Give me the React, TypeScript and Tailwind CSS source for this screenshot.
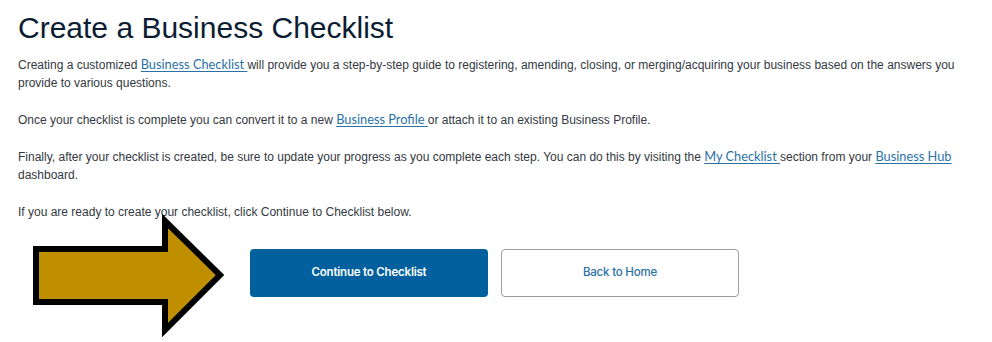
export default function App() {
  const link = 'text-[#2a71a8] underline underline-offset-2 decoration-[#2a71a8] font-["Lato",sans-serif] text-[12.8px] leading-none';

  return (
    <div className="relative w-[992px] h-[342px] bg-white overflow-hidden font-['Liberation_Sans',Arial,sans-serif]">
      <div className="px-[18px] pt-[11px]">
        <h1 className="text-[30px] leading-[34px] text-[#0b1d33]">Create a Business Checklist</h1>
        <div className="mt-[11px] text-[12px] leading-[18px] text-[#333842] space-y-[19px]">
          <p>
            Creating a customized <a className={link}>Business Checklist </a>will provide you a step-by-step guide to registering, amending, closing, or merging/acquiring your business based on the answers you provide to various questions.
          </p>
          <p>
            Once your checklist is complete you can convert it to a new <a className={link}>Business Profile </a>or attach it to an existing Business Profile.
          </p>
          <p>
            Finally, after your checklist is created, be sure to update your progress as you complete each step. You can do this by visiting the <a className={link}>My Checklist </a>section from your <a className={link}>Business Hub</a> dashboard.
          </p>
          <p>If you are ready to create your checklist, click Continue to Checklist below.</p>
        </div>
        <div className="mt-[28px] flex justify-center gap-[13px] pr-[3px] font-['Inter',sans-serif] text-[11.5px] tracking-[-0.2px]">
          <button className="w-[238px] h-[48px] rounded-[4px] bg-[#02609e] text-white font-semibold">
            Continue to Checklist
          </button>
          <button className="w-[238px] h-[48px] rounded-[4px] bg-white border border-[#9b9ca3] text-[#2a6ea6] font-medium">
            Back to Home
          </button>
        </div>
      </div>

      <svg className="absolute left-[30px] top-[212px]" width="200" height="128" viewBox="30 212 200 128">
        <polygon
          points="36,249 165,249 165,221 220,275 165,330 165,302 36,302"
          fill="#bf8f00"
          stroke="#000"
          strokeWidth="6"
          strokeLinejoin="miter"
        />
      </svg>
    </div>
  );
}
